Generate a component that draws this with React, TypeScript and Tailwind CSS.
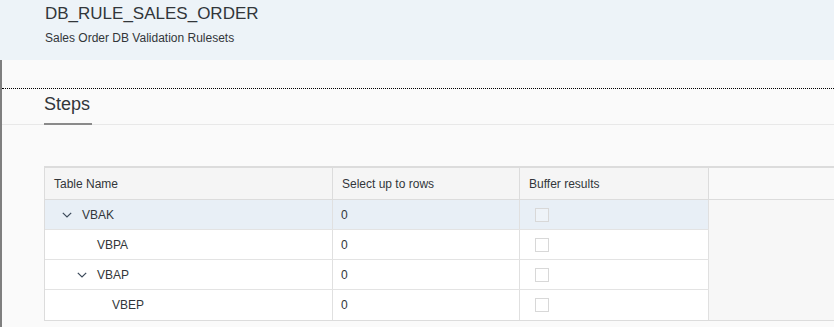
import React from "react";

type Row = { name: string; level: number; expandable: boolean; rows: number; selected?: boolean };

const rows: Row[] = [
  { name: "VBAK", level: 0, expandable: true, rows: 0, selected: true },
  { name: "VBPA", level: 1, expandable: false, rows: 0 },
  { name: "VBAP", level: 1, expandable: true, rows: 0 },
  { name: "VBEP", level: 2, expandable: false, rows: 0 },
];

function Chevron() {
  return (
    <svg width="10" height="6" viewBox="0 0 10 6" className="block">
      <polyline points="0.8,0.8 5,5 9.2,0.8" fill="none" stroke="#3b4a5a" strokeWidth="1.2" />
    </svg>
  );
}

export default function App() {
  return (
    <div
      className="w-[834px] h-[327px] overflow-hidden bg-[#fafafa] text-[#32363a]"
      style={{ fontFamily: '"Liberation Sans", Arial, sans-serif' }}
    >
      {/* Object header */}
      <div className="h-[60px] bg-[#edf3f8] pl-[45px] pt-[3px]">
        <div className="text-[17px] leading-[22px]">DB_RULE_SALES_ORDER</div>
        <div className="mt-[5px] text-[12px] leading-[16px]">Sales Order DB Validation Rulesets</div>
      </div>

      {/* Body */}
      <div className="h-[267px] border-l-2 border-[#7f7f7f]">
        <div className="h-[28px]" />
        <div className="border-t border-dotted border-black" />

        {/* Tabs */}
        <div className="mt-[3px] border-b border-[#e8e8e8] pl-[42px]">
          <div className="-mb-px inline-block border-b-2 border-[#8a8a8a] pb-[7px] pr-[2px] text-[18px] leading-[24px]">
            Steps
          </div>
        </div>

        {/* Table */}
        <div className="ml-[42px] mt-[41px] border-t-2 border-b border-l border-[#dcdcdc] text-[12px]">
          <div className="flex h-[32px] border-b border-[#dcdcdc]">
            <div className="flex w-[288px] items-center border-r border-[#dcdcdc] bg-[#f5f5f5] pl-[9px]">Table Name</div>
            <div className="flex w-[187px] items-center border-r border-[#dcdcdc] bg-[#f5f5f5] pl-[9px]">Select up to rows</div>
            <div className="flex w-[189px] items-center border-r border-[#dcdcdc] bg-[#f5f5f5] pl-[9px]">Buffer results</div>
            <div className="flex-1 bg-[#f9f9f9]" />
          </div>
          <div className="flex">
            <div className="w-[664px]">
              {rows.map((r, i) => (
                <div
                  key={r.name}
                  className={
                    "flex h-[30px] " +
                    (i < rows.length - 1 ? "border-b border-[#e3e3e3] " : "") +
                    (r.selected ? "bg-[#e8eff6]" : "bg-white")
                  }
                >
                  <div className="flex w-[288px] items-center border-r border-[#e0e0e0] pl-[8px]">
                    <div style={{ width: r.level * 15 }} className="shrink-0" />
                    <div className="flex w-[29px] shrink-0 items-center pl-[9px]">
                      {r.expandable && <Chevron />}
                    </div>
                    <span>{r.name}</span>
                  </div>
                  <div className="flex w-[187px] items-center border-r border-[#e0e0e0] pl-[8px]">{r.rows}</div>
                  <div className="flex w-[189px] items-center border-r border-[#e0e0e0] pl-[15px]">
                    <div
                      className={
                        "h-[14px] w-[14px] border border-[#d8d8d8] " +
                        (r.selected ? "bg-[#eef3f8]" : "bg-white")
                      }
                    />
                  </div>
                </div>
              ))}
            </div>
            <div className="flex-1 bg-[#f7f7f7]" />
          </div>
        </div>
      </div>
    </div>
  );
}
